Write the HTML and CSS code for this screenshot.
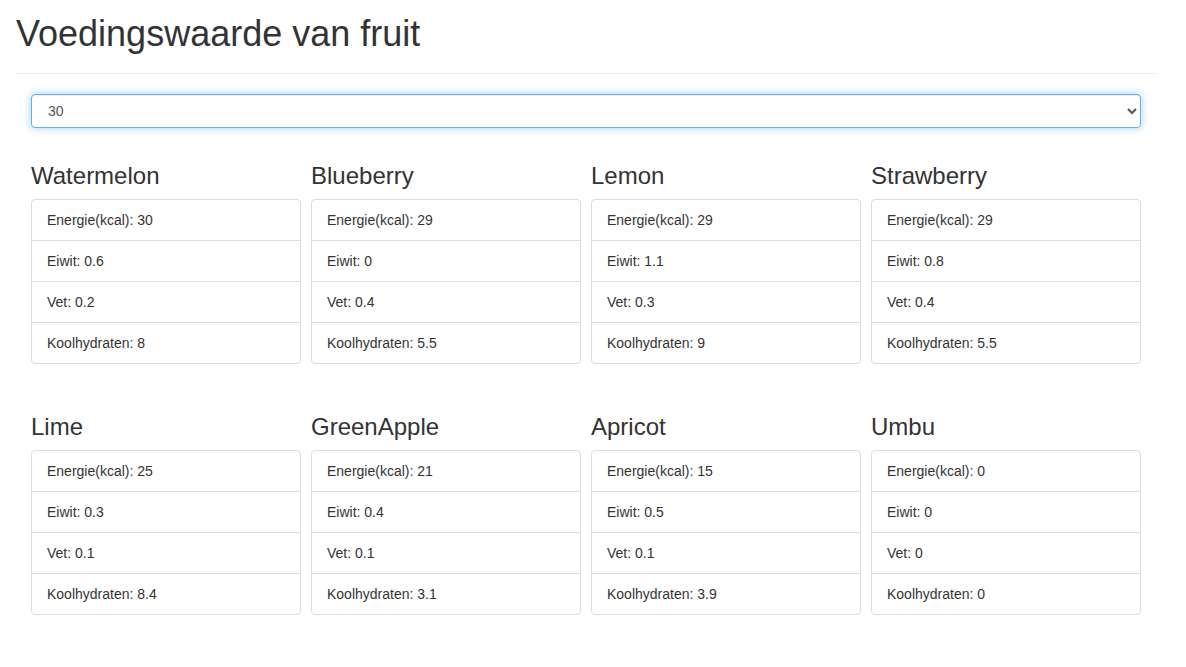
FILE: index.html
```html
<!DOCTYPE html>
<html lang="nl">
<head>
<meta charset="utf-8">
<title>Voedingswaarde van fruit</title>
<link rel="stylesheet" href="styles.css">
</head>
<body>
<div class="page">
  <div class="page-header">
    <h1>Voedingswaarde van fruit</h1>
  </div>
  <div class="content">
    <select class="form-control">
      <option>30</option>
      <option>25</option>
      <option>20</option>
    </select>
    <div class="grid">
      <div class="fruit">
        <h3>Watermelon</h3>
        <ul class="list-group">
          <li>Energie(kcal): 30</li>
          <li>Eiwit: 0.6</li>
          <li>Vet: 0.2</li>
          <li>Koolhydraten: 8</li>
        </ul>
      </div>
      <div class="fruit">
        <h3>Blueberry</h3>
        <ul class="list-group">
          <li>Energie(kcal): 29</li>
          <li>Eiwit: 0</li>
          <li>Vet: 0.4</li>
          <li>Koolhydraten: 5.5</li>
        </ul>
      </div>
      <div class="fruit">
        <h3>Lemon</h3>
        <ul class="list-group">
          <li>Energie(kcal): 29</li>
          <li>Eiwit: 1.1</li>
          <li>Vet: 0.3</li>
          <li>Koolhydraten: 9</li>
        </ul>
      </div>
      <div class="fruit">
        <h3>Strawberry</h3>
        <ul class="list-group">
          <li>Energie(kcal): 29</li>
          <li>Eiwit: 0.8</li>
          <li>Vet: 0.4</li>
          <li>Koolhydraten: 5.5</li>
        </ul>
      </div>
      <div class="fruit">
        <h3>Lime</h3>
        <ul class="list-group">
          <li>Energie(kcal): 25</li>
          <li>Eiwit: 0.3</li>
          <li>Vet: 0.1</li>
          <li>Koolhydraten: 8.4</li>
        </ul>
      </div>
      <div class="fruit">
        <h3>GreenApple</h3>
        <ul class="list-group">
          <li>Energie(kcal): 21</li>
          <li>Eiwit: 0.4</li>
          <li>Vet: 0.1</li>
          <li>Koolhydraten: 3.1</li>
        </ul>
      </div>
      <div class="fruit">
        <h3>Apricot</h3>
        <ul class="list-group">
          <li>Energie(kcal): 15</li>
          <li>Eiwit: 0.5</li>
          <li>Vet: 0.1</li>
          <li>Koolhydraten: 3.9</li>
        </ul>
      </div>
      <div class="fruit">
        <h3>Umbu</h3>
        <ul class="list-group">
          <li>Energie(kcal): 0</li>
          <li>Eiwit: 0</li>
          <li>Vet: 0</li>
          <li>Koolhydraten: 0</li>
        </ul>
      </div>
    </div>
  </div>
</div>
</body>
</html>
```

FILE: styles.css
```css
html, body {
  margin: 0;
  padding: 0;
  background: #fff;
}
body {
  font-family: "Liberation Sans", Arial, Helvetica, sans-serif;
  font-size: 14px;
  line-height: 20px;
  color: #333;
}
.page {
  width: 1140px;
  margin-left: 16px;
}
.page-header {
  padding-bottom: 9px;
  border-bottom: 1px solid #eee;
}
.page-header h1 {
  margin: 14px 0 10px;
  font-size: 36px;
  font-weight: 500;
  line-height: 39.6px;
}
.content {
  padding: 0 15px;
}
.form-control {
  display: block;
  width: 100%;
  height: 34px;
  margin-top: 20px;
  padding: 6px 12px;
  font-family: inherit;
  font-size: 14px;
  color: #555;
  background: #fff;
  border: 1px solid #66afe9;
  border-radius: 4px;
  box-shadow: inset 0 1px 1px rgba(0,0,0,.075), 0 0 8px rgba(102,175,233,.6);
  outline: none;
  box-sizing: border-box;
}
.grid {
  display: grid;
  grid-template-columns: repeat(4, 270px);
  column-gap: 10px;
  row-gap: 49px;
  margin-top: 34px;
}
.fruit h3 {
  margin: 0 0 10px;
  font-size: 24px;
  font-weight: 500;
  line-height: 27px;
}
.list-group {
  list-style: none;
  margin: 0;
  padding: 0;
  border: 1px solid #ddd;
  border-radius: 4px;
}
.list-group li {
  padding: 10px 15px;
  line-height: 20px;
  border-top: 1px solid #ddd;
}
.list-group li:first-child {
  border-top: none;
}
```
